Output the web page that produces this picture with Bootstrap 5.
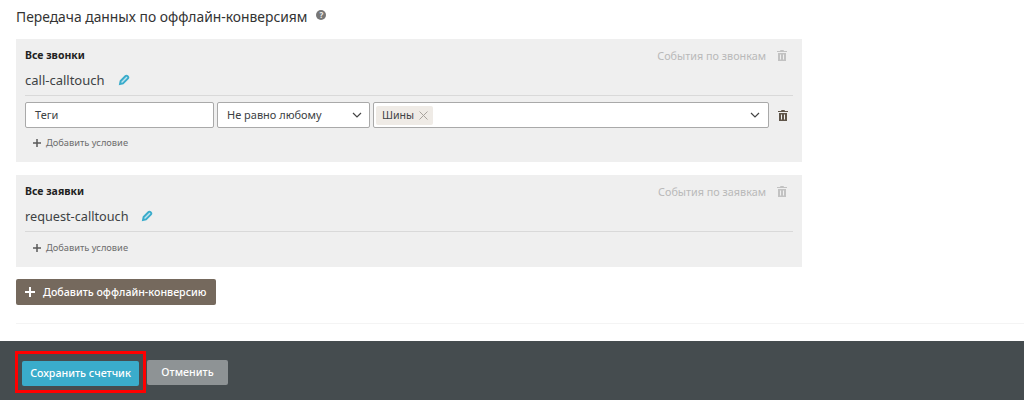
<!DOCTYPE html>
<html lang="ru">
<head>
<meta charset="utf-8">
<title>Офлайн-конверсии</title>
<link href="https://cdn.jsdelivr.net/npm/bootstrap@5.3.0/dist/css/bootstrap.min.css" rel="stylesheet">
<style>
html,body{height:400px;overflow:hidden;background:#fff;}
body{font-family:"Noto Sans","Open Sans",sans-serif;color:#3d4244;display:flex;flex-direction:column;}
.page-main{height:341px;padding:8px 0 0 16px;}
.page-title{font-size:13.85px;line-height:18px;height:18px;margin:0 0 13px;font-weight:400;color:#333;}
.help-dot{width:10px;height:10px;border-radius:50%;background:#777;color:#eee;font-size:8px;line-height:10px;text-align:center;font-weight:700;margin-left:9px;position:relative;top:-2px;}
.cond-panel{width:786px;background:#efefef;padding:9px 9px 0;}
.panel-a{height:123px;margin-bottom:13px;}
.panel-b{height:92px;margin-bottom:12px;}
.panel-head{font-size:10.5px;font-weight:700;line-height:15px;color:#222;height:15px;}
.panel-events{font-size:10.8px;font-weight:400;color:#b9b9b9;padding-right:6px;gap:11px;}
.conv-name{font-size:13px;line-height:18px;margin-top:8px;height:18px;color:#3d4244;gap:13px;}
.panel-b .conv-name{font-size:12.7px;}
.panel-sep{border-top:1px solid #d9d9d9;margin-top:6px;}
.cond-row{margin-top:6px;height:26px;gap:3px;}
.fake-field{height:26px;background:#fff;border:1px solid #a9a9a9;border-radius:2px;font-size:11px;line-height:24px;color:#3d4244;}
.field-tag{width:189px;padding-left:9px;}
.field-op{width:153px;padding:0 7px 0 9px;}
.field-val{width:396px;padding:0 8px 0 2px;}
.tag-chip{height:19px;line-height:19px;background:#efebe6;border-radius:2px;padding:0 5px 0 6px;font-size:10.6px;gap:5px;}
.add-cond{font-size:9.3px;color:#6d6d6d;line-height:14px;padding-left:8px;margin-top:8px;gap:5px;}
.panel-b .add-cond{margin-top:9px;}
.trash-end{margin-left:6px;}
.btn-offline{width:200px;height:26px;padding:0 0 0 9px;background:#75695d;color:#fff;border:0;border-radius:2px;font-size:10.65px;font-weight:500;line-height:26px;gap:8px;white-space:nowrap;}
.soft-line{border-top:1px solid #f4f4f4;margin-top:18px;}
.page-foot{height:59px;background:#454c4f;padding:10px 0 0 15px;}
.save-frame{border:3px solid #f00;height:42px;width:131px;padding:6px 4px;margin-right:1px;}
.btn-save,.btn-cancel{height:25px;padding:0;border:0;border-radius:2px;color:#fff;font-size:10.7px;font-weight:500;line-height:25px;}
.btn-save{width:117px;background:#3aaccb;}
.btn-cancel{width:81px;background:#8e9395;margin-top:9px;}
</style>
</head>
<body>
<div class="page-main">
  <h1 class="page-title d-flex align-items-center">Передача данных по оффлайн-конверсиям<span class="help-dot d-inline-block">?</span></h1>

  <div class="cond-panel panel-a">
    <div class="panel-head d-flex justify-content-between">
      <span>Все звонки</span>
      <span class="panel-events d-flex align-items-center">События по звонкам
        <svg width="10" height="11" viewBox="0 0 10 11"><path fill="#c2c2c2" d="M3.500 0h3l.5 1h3v1H0V1h3zM1 3h8v8H1zm2 1.500v5h1v-5zm3 0v5h1v-5z" fill-rule="evenodd"/></svg>
      </span>
    </div>
    <div class="conv-name d-flex align-items-center">call-calltouch
      <svg width="12" height="12" viewBox="0 0 12 12"><path fill="#bfe3ee" stroke="#3aaccb" stroke-width="1.900" d="M2 10l.6-3 5-5a1.200 1.200 0 0 1 1.700 0l.7.700a1.200 1.200 0 0 1 0 1.700l-5 5z"/></svg>
    </div>
    <div class="panel-sep"></div>
    <div class="cond-row d-flex align-items-center">
      <div class="fake-field field-tag">Теги</div>
      <div class="fake-field field-op d-flex justify-content-between align-items-center">Не равно любому
        <svg width="10" height="6" viewBox="0 0 10 6"><path fill="none" stroke="#444" stroke-width="1.200" d="M1 1l4 4 4-4"/></svg>
      </div>
      <div class="fake-field field-val d-flex justify-content-between align-items-center">
        <span class="tag-chip d-flex align-items-center">Шины
          <svg width="9" height="9" viewBox="0 0 9 9"><path stroke="#a8a39d" d="M.5.500l8 8M8.500.500l-8 8"/></svg>
        </span>
        <svg width="10" height="6" viewBox="0 0 10 6"><path fill="none" stroke="#444" stroke-width="1.200" d="M1 1l4 4 4-4"/></svg>
      </div>
      <svg width="10" height="11" viewBox="0 0 10 11" class="trash-end"><path fill="#5f5549" d="M3.500 0h3l.5 1h3v1H0V1h3zM1 3h8v8H1zm2 1.500v5h1v-5zm3 0v5h1v-5z" fill-rule="evenodd"/></svg>
    </div>
    <div class="add-cond d-flex align-items-center">
      <svg width="8" height="8" viewBox="0 0 8 8"><path stroke="#5a5a5a" stroke-width="1.500" d="M4 0v8M0 4h8"/></svg>Добавить условие
    </div>
  </div>

  <div class="cond-panel panel-b">
    <div class="panel-head d-flex justify-content-between">
      <span>Все заявки</span>
      <span class="panel-events d-flex align-items-center">События по заявкам
        <svg width="10" height="11" viewBox="0 0 10 11"><path fill="#c2c2c2" d="M3.500 0h3l.5 1h3v1H0V1h3zM1 3h8v8H1zm2 1.500v5h1v-5zm3 0v5h1v-5z" fill-rule="evenodd"/></svg>
      </span>
    </div>
    <div class="conv-name d-flex align-items-center">request-calltouch
      <svg width="12" height="12" viewBox="0 0 12 12"><path fill="#bfe3ee" stroke="#3aaccb" stroke-width="1.900" d="M2 10l.6-3 5-5a1.200 1.200 0 0 1 1.700 0l.7.700a1.200 1.200 0 0 1 0 1.700l-5 5z"/></svg>
    </div>
    <div class="panel-sep"></div>
    <div class="add-cond d-flex align-items-center">
      <svg width="8" height="8" viewBox="0 0 8 8"><path stroke="#5a5a5a" stroke-width="1.500" d="M4 0v8M0 4h8"/></svg>Добавить условие
    </div>
  </div>

  <button type="button" class="btn btn-offline d-flex align-items-center">
    <svg width="10" height="10" viewBox="0 0 10 10"><path stroke="#fff" stroke-width="2" d="M5 0v10M0 5h10"/></svg>Добавить оффлайн-конверсию
  </button>
  <div class="soft-line"></div>
</div>
<div class="page-foot d-flex align-items-start">
  <div class="save-frame"><button type="button" class="btn btn-save">Сохранить счетчик</button></div>
  <button type="button" class="btn btn-cancel">Отменить</button>
</div>
<script src="https://cdn.jsdelivr.net/npm/bootstrap@5.3.0/dist/js/bootstrap.bundle.min.js"></script>
</body>
</html>
